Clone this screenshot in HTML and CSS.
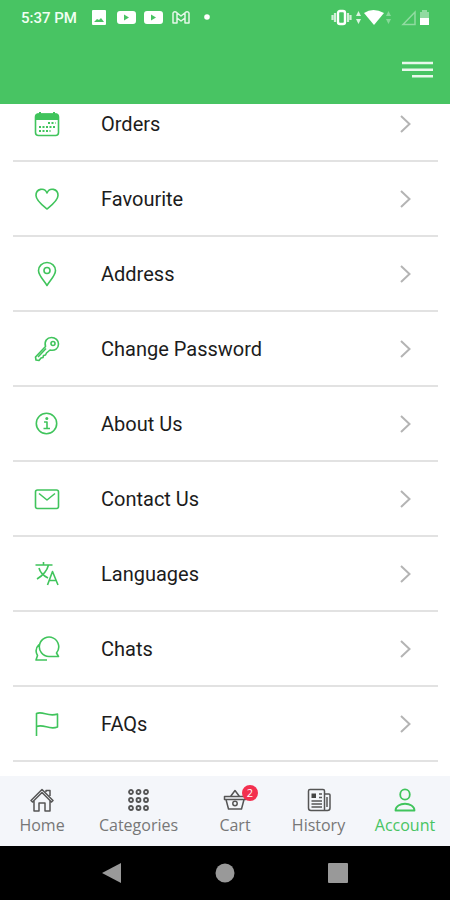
FILE: index.html
```html
<!DOCTYPE html>
<html lang="en">
<head>
<meta charset="utf-8">
<meta name="viewport" content="width=device-width, initial-scale=1">
<title>Account</title>
<link rel="stylesheet" href="styles.css">
</head>
<body>
<div class="app">
  <header class="header">
    <div class="status">
      <div class="status-left">
        <span class="time">5:37 PM</span>
        <svg width="120" height="16" viewBox="0 0 120 16" fill="#fff">
          <path fill-rule="evenodd" d="M2 0h12q1 0 1 1v13q0 1-1 1H2q-1 0-1-1V1q0-1 1-1ZM3 12h10l-3-4-2 2-2-1Z"/>
          <path fill-rule="evenodd" d="M29 1h13q3 0 3 3v7q0 3-3 3H29q-3 0-3-3V4q0-3 3-3ZM33 4.500v6l5-3Z"/>
          <path fill-rule="evenodd" d="M56 1h13q3 0 3 3v7q0 3-3 3H56q-3 0-3-3V4q0-3 3-3ZM60 4.500v6l5-3Z"/>
          <path fill="none" stroke="#fff" stroke-opacity=".85" stroke-width="1.500" stroke-linejoin="round" d="M82 13V3q1-2 3-1l5 4 5-4q2-1 3 1v10h-4V8l-4 3-4-3v5ZM86 3v5M94 3v5"/>
          <circle cx="116" cy="7" r="2.800"/>
        </svg>
      </div>
      <svg class="status-right" width="100" height="18" viewBox="0 0 100 18" fill="#fff">
        <rect x="7" y="2" width="7" height="13" rx="2" fill="none" stroke="#fff" stroke-width="2.400"/>
        <path d="M4 4v9M17 4v9M1.500 6v5M19.500 6v5" stroke="#fff" stroke-opacity=".75" stroke-width="2.200"/>
        <path opacity=".8" d="M25 7l2.500-5L30 7ZM25 10l2.500 5 2.500-5Z"/>
        <path d="M33 4q9-6 20 0l-10 12Z"/>
        <path opacity=".35" d="M55 7l2.500-5L60 7ZM55 10l2.500 5 2.500-5Z"/>
        <path fill="none" stroke="#fff" stroke-opacity=".4" stroke-width="1.500" d="M72 15.500 84 3v12.500Z"/>
        <path opacity=".4" d="M89 3h2V1h5v2h2v6h-9Z"/><path d="M89 9h9v7h-9Z"/>
      </svg>
    </div>
    <button class="menu" type="button" aria-label="Menu">
      <svg width="32" height="20" viewBox="0 0 32 20" stroke="#fff" stroke-opacity=".88" stroke-width="2.400"><path d="M0 3h31M0 9.700h31M10 16.300h21"/></svg>
    </button>
  </header>

  <main class="content">
    <ul class="list">
      <li><a class="row" href="#orders">
        <svg class="icon" viewBox="0 0 26 26"><rect x="1.500" y="3" width="23" height="21.500" rx="3"/><path class="solid" d="M1.500 9V5q0-2.500 2.500-2.500h18q2.500 0 2.500 2.500v4ZM5 1h2v3H5ZM19 1h2v3h-2Z"/><path class="dots" d="M14 12h7.500M5 16h16.500M5 20h11.500"/></svg>
        <span class="label">Orders</span><svg class="chevron" viewBox="0 0 12 18"><path d="m1 1 8.500 8L1 17"/></svg></a></li>
      <li><a class="row" href="#favourite">
        <svg class="icon" viewBox="0 0 26 26"><path d="M13 23C8 19 2 14.500 2 9.500 2 2.500 10.500 1 13 7c2.500-6 11-4.500 11 2.500C24 14.500 18 19 13 23Z"/></svg>
        <span class="label">Favourite</span><svg class="chevron" viewBox="0 0 12 18"><path d="m1 1 8.500 8L1 17"/></svg></a></li>
      <li><a class="row" href="#address">
        <svg class="icon" viewBox="0 0 26 26"><path d="M13 24.500C10 19.500 4.500 14.500 4.500 9.500a8.500 8 0 0 1 17 0C21.500 14.500 16 19.500 13 24.500Z"/><circle cx="13" cy="9.500" r="3"/></svg>
        <span class="label">Address</span><svg class="chevron" viewBox="0 0 12 18"><path d="m1 1 8.500 8L1 17"/></svg></a></li>
      <li><a class="row" href="#password">
        <svg class="icon" viewBox="0 0 26 26"><path d="M11.500 10.500C10 5 13 1.500 17.500 1.500c4 0 7 3 7 6.500 0 4.500-3.500 7-8.500 6L12.500 17l-1 2-2 .5-.5 2-2 .5L5 24.500l-3-.5-.5-3Z"/><circle cx="19" cy="7.500" r="2"/><path d="m4 21 8-8.500"/></svg>
        <span class="label">Change Password</span><svg class="chevron" viewBox="0 0 12 18"><path d="m1 1 8.500 8L1 17"/></svg></a></li>
      <li><a class="row" href="#about">
        <svg class="icon" viewBox="0 0 26 26"><circle cx="12.500" cy="12.500" r="10.200"/><path d="M10 11h3v6.500M9.500 17.500h6.500"/><circle class="solid" cx="12.800" cy="7.500" r="1.500"/></svg>
        <span class="label">About Us</span><svg class="chevron" viewBox="0 0 12 18"><path d="m1 1 8.500 8L1 17"/></svg></a></li>
      <li><a class="row" href="#contact">
        <svg class="icon" viewBox="0 0 26 26"><rect x="1.500" y="4" width="23" height="18.500" rx="2"/><path d="m5 7.500 8 6.500 8-6.500"/></svg>
        <span class="label">Contact Us</span><svg class="chevron" viewBox="0 0 12 18"><path d="m1 1 8.500 8L1 17"/></svg></a></li>
      <li><a class="row" href="#languages">
        <svg class="icon" viewBox="0 0 26 26"><path d="M1.500 4h17M9.500 1v3M5 7c1 4 5 8 9 10M14.500 4C13 10 8 15 3 18M13.500 24l5-13.500L24 24M15 19.500h7.500"/></svg>
        <span class="label">Languages</span><svg class="chevron" viewBox="0 0 12 18"><path d="m1 1 8.500 8L1 17"/></svg></a></li>
      <li><a class="row" href="#chats">
        <svg class="icon" viewBox="0 0 26 26"><path d="M24.500 20.500h-9.500a9.700 9.700 0 1 1 7.500-3.500ZM5 8.500C1.500 12 1.500 16 3.500 19.500l-1.500 4.500h11"/></svg>
        <span class="label">Chats</span><svg class="chevron" viewBox="0 0 12 18"><path d="m1 1 8.500 8L1 17"/></svg></a></li>
      <li><a class="row" href="#faqs">
        <svg class="icon" viewBox="0 0 26 26"><path d="M2.500 25V2.500C9-.5 14 6.500 23.500 3v13C15 19.500 10 12.500 2.500 15.500"/></svg>
        <span class="label">FAQs</span><svg class="chevron" viewBox="0 0 12 18"><path d="m1 1 8.500 8L1 17"/></svg></a></li>
    </ul>
  </main>

  <nav class="tabs">
    <a class="tab" href="#home"><svg class="tab-icon" viewBox="0 0 24 24"><path d="m1 12.500 11-11 11 11-1.500 1.500L12 4.500 2.500 14ZM4 13v10h5v-8h6v8h5V13M16 4V2.500h4V8"/></svg><span>Home</span></a>
    <a class="tab" href="#categories"><svg class="tab-icon" viewBox="0 0 24 24"><g stroke-width="1.800"><circle cx="4" cy="4" r="2"/><circle cx="11.500" cy="4" r="2"/><circle cx="19" cy="4" r="2"/><circle cx="4" cy="12" r="2"/><circle cx="11.500" cy="12" r="2"/><circle cx="19" cy="12" r="2"/><circle cx="4" cy="20" r="2"/><circle cx="11.500" cy="20" r="2"/><circle cx="19" cy="20" r="2"/></g></svg><span>Categories</span></a>
    <a class="tab" href="#cart"><span class="cart"><svg class="tab-icon" viewBox="0 0 24 24"><path d="M1.500 8.500h21v3h-21ZM3 11.500l2.500 9.500h13L21 11.500M7.500 8.500 12 2.500l4.500 6"/><circle cx="12" cy="15.500" r="2.200"/></svg><span class="badge">2</span></span><span>Cart</span></a>
    <a class="tab" href="#history"><svg class="tab-icon" viewBox="0 0 24 24"><path d="M3 1.500h13q1.500 0 1.500 1.500v19.500H4q-2.500 0-2.500-2.500V3q0-1.500 1.500-1.500ZM17.500 6H22q1 0 1 1v13q0 2.500-2.500 2.500h-3M20 9v10M12 6h3M12 9.500h3M4.500 13h10.500M4.500 16h10.500M4.500 19h10.500"/><path class="solid" d="M4.500 5.500H9V10H4.500Z"/></svg><span>History</span></a>
    <a class="tab active" href="#account" aria-current="page"><svg class="tab-icon" viewBox="0 0 24 24"><ellipse cx="12" cy="6.500" rx="4.800" ry="5.200"/><path d="M2.500 22.500c0-9 19-9 19 0Z"/></svg><span>Account</span></a>
  </nav>

  <footer class="system">
    <button type="button" aria-label="Back"><svg width="20" height="22" viewBox="0 0 20 22"><path d="M19 1v20L0 11Z"/></svg></button>
    <button type="button" aria-label="Home screen"><svg width="20" height="22" viewBox="0 0 20 22"><circle cx="10" cy="11" r="9.500"/></svg></button>
    <button type="button" aria-label="Recent apps"><svg width="20" height="22" viewBox="0 0 20 22"><rect y="1" width="20" height="20" rx="1"/></svg></button>
  </footer>
</div>
</body>
</html>
```
FILE: styles.css
```css
* { box-sizing: border-box; }
body { margin: 0; font-family: Roboto, "Liberation Sans", sans-serif; background: #fff; }
a { color: inherit; text-decoration: none; }
button { display: flex; padding: 0; border: 0; background: none; }
svg { display: block; flex: none; }

.app { display: flex; flex-direction: column; height: 100vh; }

.header { flex: none; background: #48c463; }
.status { display: flex; justify-content: space-between; height: 36px; padding: 0 19px 0 21px; align-items: center; }
.status-left { display: flex; align-items: center; gap: 14px; }
.time { font-size: 15px; font-weight: 500; color: #f1fff3; }
.menu { margin: 24px 16px 24px auto; }

.content { flex: 1; min-height: 0; overflow: hidden; }
/* The list is scrolled so that its first row is partly under the header. */
.list { list-style: none; margin: -17px 12px 0 13px; padding: 0; }
.row { display: flex; align-items: center; height: 75px; padding: 0 26px 0 21px; border-bottom: 2px solid #e2e2e2; }
.icon { width: 26px; height: 26px; fill: none; stroke: #40c45c; stroke-width: 1.6; stroke-linejoin: round; }
.solid { fill: #444; stroke: none; }
.icon .solid { fill: #40c45c; }
.icon .dots { stroke-width: 2; stroke-dasharray: 2 1.5; }
.label { flex: 1; margin-left: 41px; font-size: 20px; color: #1c1c1c; }
.chevron { width: 12px; height: 18px; fill: none; stroke: #b4b4b4; stroke-width: 2; }

.tabs { flex: none; display: grid; grid-template-columns: 84fr 109fr 84fr 83fr 90fr; height: 70px; padding-top: 12px; background: #f4f6fa; color: #777; }
.tab { display: flex; flex-direction: column; align-items: center; gap: 2px; font-family: "Open Sans", "Noto Sans", sans-serif; font-size: 16px; line-height: 22px; }
.tab-icon { width: 24px; height: 24px; fill: none; stroke: #555; stroke-width: 1.5; stroke-linejoin: round; }
.active { color: #48c463; }
.active .tab-icon { stroke: #40c45c; stroke-width: 1.8; }
.cart { position: relative; }
.badge { position: absolute; top: -3px; right: -11px; width: 16px; height: 16px; border-radius: 50%; background: #f3304f; color: #fff; font-size: 11px; line-height: 16px; text-align: center; }

.system { flex: none; display: flex; justify-content: center; align-items: center; gap: 93px; height: 54px; background: #000; }
.system svg { fill: #999; }
```
